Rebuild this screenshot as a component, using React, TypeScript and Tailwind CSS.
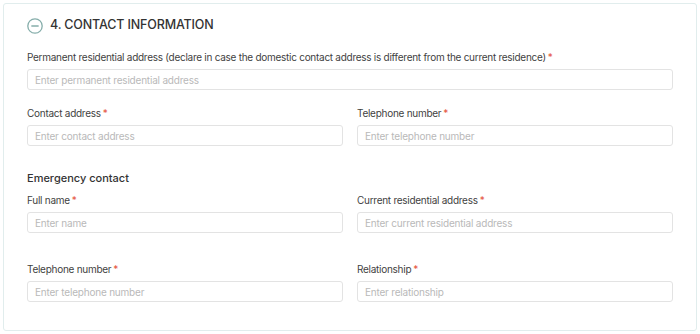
function Label({ text }: { text: string }) {
  return (
    <div className="h-[12px] text-[10px] leading-[12px] tracking-[-0.27px] text-[#3f3f3f] whitespace-nowrap">
      {text}
      <span className="text-[#e5533c] ml-[2px]">*</span>
    </div>
  );
}

function Field({ label, placeholder }: { label: string; placeholder: string }) {
  return (
    <div className="flex flex-col">
      <Label text={label} />
      <input
        placeholder={placeholder}
        className="mt-[6px] h-[21px] w-full rounded-[3px] border border-[#e3e3e3] bg-white px-[7px] text-[10px] tracking-[-0.2px] outline-none placeholder:text-[#b9b9b9]"
      />
    </div>
  );
}

export default function App() {
  return (
    <div className="w-[700px] h-[334px] bg-white pl-[3px] pt-[3px]" style={{ fontFamily: 'Inter, "Noto Sans", sans-serif' }}>
      <div className="w-[694px] h-[328px] rounded-[3px] border border-[#e1eded] pl-[23px] pr-[23px] pt-[14px]">
        <div className="flex items-center h-[15px]">
          <svg width="16" height="16" viewBox="0 0 16 16" className="shrink-0">
            <circle cx="8" cy="8" r="7.2" fill="none" stroke="#86aeab" strokeWidth="1.3" />
            <line x1="4.8" y1="8" x2="11.2" y2="8" stroke="#86aeab" strokeWidth="1.3" strokeLinecap="round" />
          </svg>
          <span className="ml-[7px] text-[12.5px] font-medium text-[#333] tracking-[-0.15px]">4. CONTACT INFORMATION</span>
        </div>

        <div className="mt-[18px]">
          <Field
            label="Permanent residential address (declare in case the domestic contact address is different from the current residence)"
            placeholder="Enter permanent residential address"
          />
        </div>

        <div className="mt-[17px] grid grid-cols-2 gap-x-[14px]">
          <Field label="Contact address" placeholder="Enter contact address" />
          <Field label="Telephone number" placeholder="Enter telephone number" />
        </div>

        <div className="mt-[24px] h-[16px] text-[11px] leading-[16px] font-medium text-[#333]">Emergency contact</div>

        <div className="mt-[8px] grid grid-cols-2 gap-x-[14px]">
          <Field label="Full name" placeholder="Enter name" />
          <Field label="Current residential address" placeholder="Enter current residential address" />
        </div>

        <div className="mt-[30px] grid grid-cols-2 gap-x-[14px]">
          <Field label="Telephone number" placeholder="Enter telephone number" />
          <Field label="Relationship" placeholder="Enter relationship" />
        </div>
      </div>
    </div>
  );
}
